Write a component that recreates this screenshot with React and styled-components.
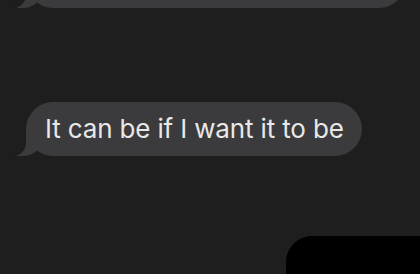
import React from "react";
import styled, { createGlobalStyle } from "styled-components";

const GlobalStyle = createGlobalStyle`
  html, body {
    margin: 0;
    padding: 0;
    background: #1e1e1e;
    overflow: hidden;
  }
  body {
    font-family: Inter, "Liberation Sans", sans-serif;
    -webkit-font-smoothing: antialiased;
  }
`;

const Thread = styled.div`
  display: flex;
  flex-direction: column;
  width: 420px;
  height: 274px;
  overflow: hidden;
`;

const Scroll = styled.div`
  display: flex;
  flex-direction: column;
  margin-top: -46px;
  padding: 0 0 0 26px;
`;

const Bubble = styled.div`
  position: relative;
  align-self: flex-start;
  box-sizing: border-box;
  width: ${(p) => p.$width || "auto"};
  min-height: 54px;
  margin-top: ${(p) => p.$gap || 0}px;
  padding: 11px 18px 12px 19px;
  border-radius: 27px;
  background: #3b3b3d;
  color: #e8e8e8;
  font-size: 26px;
  line-height: 31px;
  letter-spacing: -0.15px;
  white-space: nowrap;

  &::before {
    content: "";
    position: absolute;
    z-index: 0;
    bottom: 0;
    left: -9px;
    width: 26px;
    height: 26px;
    background: #3b3b3d;
    border-bottom-right-radius: 20px;
  }

  &::after {
    content: "";
    position: absolute;
    z-index: 1;
    bottom: 0;
    left: -13px;
    width: 13px;
    height: 26px;
    background: #1e1e1e;
    border-bottom-right-radius: 13px;
  }
`;

const Text = styled.span`
  position: relative;
  z-index: 2;
`;

const Outgoing = styled.div`
  align-self: flex-end;
  width: 134px;
  height: 60px;
  margin-top: ${(p) => p.$gap || 0}px;
  background: #000;
  border-top-left-radius: 26px;
`;

export default function App() {
  return (
    <>
      <GlobalStyle />
      <Thread>
        <Scroll>
          <Bubble $width="380px">
            <Text>&nbsp;</Text>
          </Bubble>
          <Bubble $gap={94}>
            <Text>It can be if I want it to be</Text>
          </Bubble>
          <Outgoing $gap={80} />
        </Scroll>
      </Thread>
    </>
  );
}
